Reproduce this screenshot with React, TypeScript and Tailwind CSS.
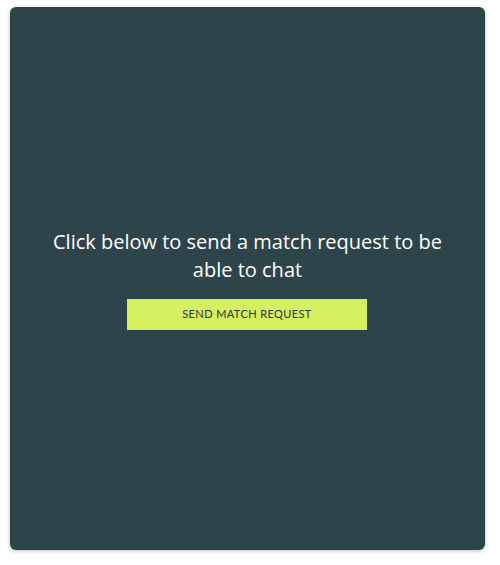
export default function App() {
  return (
    <div className="w-[500px] h-[565px] bg-white pl-[10px] pt-[7px]">
      <div className="w-[475px] h-[543px] rounded-[6px] bg-[#2d454a] shadow-[0_1px_4px_rgba(0,0,0,0.25)] flex flex-col items-center justify-center px-[38px]">
        <p className="text-white text-center text-[20px] leading-[28px] font-['Open_Sans',sans-serif]">
          Click below to send a match request to be able to chat
        </p>
        <button className="mt-[15px] mr-[1px] w-[240px] h-[31px] bg-[#d4ef5f] text-[#2b3535] text-[11px] font-['Lato',sans-serif] uppercase tracking-[0.4px]">
          Send Match Request
        </button>
      </div>
    </div>
  );
}
